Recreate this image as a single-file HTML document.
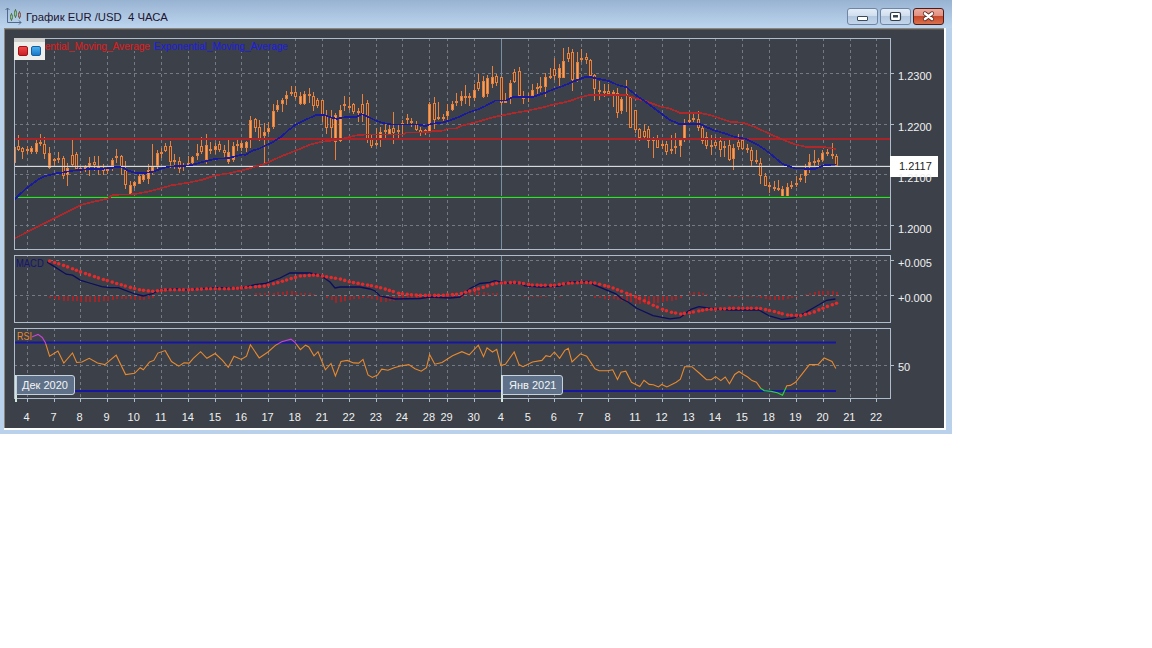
<!DOCTYPE html>
<html><head><meta charset="utf-8"><style>
html,body{margin:0;padding:0;background:#fff;width:1152px;height:648px;overflow:hidden;position:relative;font-family:"Liberation Sans",sans-serif}
.win{position:absolute;left:0;top:0;width:952px;height:434px;background:#b9d1ea}
.tb{position:absolute;left:0;top:0;width:952px;height:28px;background:linear-gradient(#98b3d2,#bdd5ee)}
.panel{position:absolute;left:4px;top:28px;width:940px;height:400px;background:#3b4049;box-shadow:inset 1px 1px 0 #8a867e,inset 1px 2px 0 #57585a}
.wl{position:absolute;background:#fdfeff}
.t{position:absolute;white-space:nowrap;line-height:1}
.btn{position:absolute;top:8px;width:29px;height:15px;border:1px solid #6e86a3;border-radius:3px;background:linear-gradient(#e4edf7 0%,#d0deee 45%,#b3c8df 50%,#c2d5ea 100%)}
.btn.cl{border-color:#4a1c1a;background:linear-gradient(#eeaa9c 0%,#e09080 45%,#c8482c 50%,#d9704c 100%)}
.lbl{position:absolute;height:18px;border:1px solid #c6d2de;border-radius:0 3px 3px 0;background:#5e7188}
</style></head><body>
<div class="win">
<div class="tb"></div>
<svg width="18" height="18" style="position:absolute;left:5px;top:7px" viewBox="0 0 18 18">
<path d="M2.5,1V15.5H16" stroke="#4f6a8c" stroke-width="1" fill="none"/>
<path d="M0.5,3L2.5,1L4.5,3M14,13.5L16,15.5L14,17.5" stroke="#4f6a8c" stroke-width="1" fill="none"/>
<path d="M6.5,6V14M10.5,2V11M14.5,4V12" stroke="#5a7a5a" stroke-width="1"/>
<rect x="5.5" y="8" width="2" height="4" fill="#9bc49b" stroke="#4d7a4d" stroke-width="0.8"/>
<rect x="9.5" y="4" width="2" height="5" fill="#9bc49b" stroke="#4d7a4d" stroke-width="0.8"/>
<rect x="13.5" y="6" width="2" height="4" fill="#c4a0a0" stroke="#7a4d4d" stroke-width="0.8"/>
</svg>
<div class="t" style="left:26px;top:11.7px;font-size:11.3px;color:#1e1430">График EUR /USD&nbsp; 4 ЧАСА</div>
<div class="btn" style="left:847px"><div style="position:absolute;left:9px;top:7px;width:9px;height:3px;background:#fff;border:1px solid #3a4a5a;border-radius:1px"></div></div>
<div class="btn" style="left:880px"><svg width="29" height="15" style="position:absolute;left:0;top:0"><rect x="9.5" y="3.5" width="10" height="8" rx="1.5" fill="#fff" stroke="#303c48" stroke-width="1.2"/><rect x="12" y="6" width="5" height="2.5" fill="#3a4654"/></svg></div>
<div class="btn cl" style="left:913px"><svg width="29" height="15" style="position:absolute;left:0;top:0"><path d="M11,4.4L18,10M18,4.4L11,10" stroke="#5a2a22" stroke-width="4.2" stroke-linecap="round"/><path d="M11,4.4L18,10M18,4.4L11,10" stroke="#fff" stroke-width="2.6" stroke-linecap="round"/></svg></div>
<div class="panel"></div>
<div class="wl" style="left:944px;top:28px;width:2px;height:402px"></div>
<div class="wl" style="left:4px;top:428px;width:942px;height:2px"></div>
<svg width="952" height="434" style="position:absolute;left:0;top:0"><defs><clipPath id="cm"><rect x="15" y="39" width="875" height="210"/></clipPath><clipPath id="rsiMid"><rect x="0" y="344" width="952" height="44"/></clipPath><clipPath id="rsiTop"><rect x="0" y="0" width="952" height="344"/></clipPath><clipPath id="rsiBot"><rect x="0" y="388" width="952" height="40"/></clipPath></defs><path d="M27.5,38V249M27.5,255V322M27.5,328V398M54.5,38V249M54.5,255V322M54.5,328V398M80.5,38V249M80.5,255V322M80.5,328V398M107.5,38V249M107.5,255V322M107.5,328V398M134.5,38V249M134.5,255V322M134.5,328V398M161.5,38V249M161.5,255V322M161.5,328V398M188.5,38V249M188.5,255V322M188.5,328V398M215.5,38V249M215.5,255V322M215.5,328V398M241.5,38V249M241.5,255V322M241.5,328V398M268.5,38V249M268.5,255V322M268.5,328V398M295.5,38V249M295.5,255V322M295.5,328V398M322.5,38V249M322.5,255V322M322.5,328V398M349.5,38V249M349.5,255V322M349.5,328V398M376.5,38V249M376.5,255V322M376.5,328V398M402.5,38V249M402.5,255V322M402.5,328V398M429.5,38V249M429.5,255V322M429.5,328V398M447.5,38V249M447.5,255V322M447.5,328V398M474.5,38V249M474.5,255V322M474.5,328V398M528.5,38V249M528.5,255V322M528.5,328V398M554.5,38V249M554.5,255V322M554.5,328V398M581.5,38V249M581.5,255V322M581.5,328V398M608.5,38V249M608.5,255V322M608.5,328V398M635.5,38V249M635.5,255V322M635.5,328V398M662.5,38V249M662.5,255V322M662.5,328V398M689.5,38V249M689.5,255V322M689.5,328V398M715.5,38V249M715.5,255V322M715.5,328V398M742.5,38V249M742.5,255V322M742.5,328V398M769.5,38V249M769.5,255V322M769.5,328V398M796.5,38V249M796.5,255V322M796.5,328V398M823.5,38V249M823.5,255V322M823.5,328V398M850.5,38V249M850.5,255V322M850.5,328V398M876.5,38V249M876.5,255V322M876.5,328V398" stroke="#737a83" stroke-width="1" stroke-dasharray="3 3" fill="none" shape-rendering="crispEdges"/><path d="M14,73.5H890M14,124.5H890M14,174.5H890M14,225.5H890M14,260.5H890M14,295.5H890M14,365.5H890" stroke="#737a83" stroke-width="1" stroke-dasharray="3 3" fill="none" shape-rendering="crispEdges"/><path d="M501.5,39V249M501.5,256V322M501.5,329V398" stroke="#7a8ea4" stroke-width="1" fill="none" shape-rendering="crispEdges"/><rect x="14.5" y="38.5" width="876" height="211" fill="none" stroke="#aebccb" stroke-width="1" shape-rendering="crispEdges"/><rect x="14.5" y="255.5" width="876" height="67" fill="none" stroke="#aebccb" stroke-width="1" shape-rendering="crispEdges"/><rect x="14.5" y="328.5" width="876" height="70" fill="none" stroke="#aebccb" stroke-width="1" shape-rendering="crispEdges"/><path d="M890,73.5H894M890,124.5H894M890,174.5H894M890,225.5H894M890,260.5H894M890,295.5H894M890,365.5H894M27.5,398V402M54.5,398V402M80.5,398V402M107.5,398V402M134.5,398V402M161.5,398V402M188.5,398V402M215.5,398V402M241.5,398V402M268.5,398V402M295.5,398V402M322.5,398V402M349.5,398V402M376.5,398V402M402.5,398V402M429.5,398V402M447.5,398V402M474.5,398V402M501.5,398V402M528.5,398V402M554.5,398V402M581.5,398V402M608.5,398V402M635.5,398V402M662.5,398V402M689.5,398V402M715.5,398V402M742.5,398V402M769.5,398V402M796.5,398V402M823.5,398V402M850.5,398V402M876.5,398V402" stroke="#aebccb" stroke-width="1" fill="none" shape-rendering="crispEdges"/><g clip-path="url(#cm)"><rect x="14" y="145" width="1" height="20" fill="#e6823e"/><rect x="13" y="147" width="3" height="16" fill="#f4a15c" stroke="none"/><path d="M13.5,147V163M15.5,147V163M13,147.5H16M13,162.5H16" stroke="#e6823e" stroke-width="1" fill="none"/><rect x="18" y="135" width="1" height="16" fill="#e6823e"/><rect x="17" y="146" width="3" height="4" fill="#e6823e"/><rect x="18" y="147" width="1" height="2" fill="#54392f"/><rect x="22" y="147" width="1" height="12" fill="#e6823e"/><rect x="21" y="148" width="3" height="4" fill="#e6823e"/><rect x="22" y="149" width="1" height="2" fill="#54392f"/><rect x="27" y="146" width="1" height="8" fill="#e6823e"/><rect x="26" y="149" width="3" height="2" fill="#e6823e"/><rect x="31" y="146" width="1" height="8" fill="#e6823e"/><rect x="30" y="148" width="3" height="4" fill="#f4a15c" stroke="none"/><path d="M30.5,148V152M32.5,148V152M30,148.5H33M30,151.5H33" stroke="#e6823e" stroke-width="1" fill="none"/><rect x="36" y="140" width="1" height="14" fill="#e6823e"/><rect x="35" y="143" width="3" height="9" fill="#f4a15c" stroke="none"/><path d="M35.5,143V152M37.5,143V152M35,143.5H38M35,151.5H38" stroke="#e6823e" stroke-width="1" fill="none"/><rect x="40" y="134" width="1" height="12" fill="#e6823e"/><rect x="39" y="142" width="3" height="2" fill="#e6823e"/><rect x="44" y="137" width="1" height="22" fill="#e6823e"/><rect x="43" y="144" width="3" height="10" fill="#e6823e"/><rect x="44" y="145" width="1" height="8" fill="#54392f"/><rect x="49" y="147" width="1" height="22" fill="#e6823e"/><rect x="48" y="153" width="3" height="15" fill="#f4a15c" stroke="none"/><path d="M48.5,153V168M50.5,153V168M48,153.5H51M48,167.5H51" stroke="#e6823e" stroke-width="1" fill="none"/><rect x="54" y="158" width="1" height="8" fill="#e6823e"/><rect x="53" y="159" width="3" height="2" fill="#f4a15c" stroke="none"/><path d="M53.5,159V161M55.5,159V161M53,159.5H56M53,160.5H56" stroke="#e6823e" stroke-width="1" fill="none"/><rect x="58" y="152" width="1" height="11" fill="#e6823e"/><rect x="57" y="158" width="3" height="2" fill="#e6823e"/><rect x="63" y="156" width="1" height="23" fill="#e6823e"/><rect x="62" y="158" width="3" height="18" fill="#e6823e"/><rect x="63" y="159" width="1" height="16" fill="#54392f"/><rect x="67" y="163" width="1" height="23" fill="#e6823e"/><rect x="66" y="168" width="3" height="7" fill="#f4a15c" stroke="none"/><path d="M66.5,168V175M68.5,168V175M66,168.5H69M66,174.5H69" stroke="#e6823e" stroke-width="1" fill="none"/><rect x="72" y="140" width="1" height="27" fill="#e6823e"/><rect x="71" y="155" width="3" height="10" fill="#e6823e"/><rect x="72" y="156" width="1" height="8" fill="#54392f"/><rect x="76" y="152" width="1" height="17" fill="#e6823e"/><rect x="75" y="154" width="3" height="15" fill="#e6823e"/><rect x="76" y="155" width="1" height="13" fill="#54392f"/><rect x="80" y="166" width="1" height="7" fill="#e6823e"/><rect x="79" y="168" width="3" height="2" fill="#f4a15c" stroke="none"/><path d="M79.5,168V170M81.5,168V170M79,168.5H82M79,169.5H82" stroke="#e6823e" stroke-width="1" fill="none"/><rect x="85" y="165" width="1" height="7" fill="#e6823e"/><rect x="84" y="167" width="3" height="2" fill="#f4a15c" stroke="none"/><path d="M84.5,167V169M86.5,167V169M84,167.5H87M84,168.5H87" stroke="#e6823e" stroke-width="1" fill="none"/><rect x="89" y="157" width="1" height="19" fill="#e6823e"/><rect x="88" y="163" width="3" height="4" fill="#f4a15c" stroke="none"/><path d="M88.5,163V167M90.5,163V167M88,163.5H91M88,166.5H91" stroke="#e6823e" stroke-width="1" fill="none"/><rect x="94" y="156" width="1" height="15" fill="#e6823e"/><rect x="93" y="162" width="3" height="3" fill="#e6823e"/><rect x="94" y="163" width="1" height="1" fill="#54392f"/><rect x="98" y="156" width="1" height="19" fill="#e6823e"/><rect x="97" y="166" width="3" height="2" fill="#e6823e"/><rect x="103" y="164" width="1" height="11" fill="#e6823e"/><rect x="102" y="169" width="3" height="2" fill="#e6823e"/><rect x="107" y="166" width="1" height="8" fill="#e6823e"/><rect x="106" y="169" width="3" height="2" fill="#f4a15c" stroke="none"/><path d="M106.5,169V171M108.5,169V171M106,169.5H109M106,170.5H109" stroke="#e6823e" stroke-width="1" fill="none"/><rect x="112" y="158" width="1" height="13" fill="#e6823e"/><rect x="111" y="160" width="3" height="6" fill="#f4a15c" stroke="none"/><path d="M111.5,160V166M113.5,160V166M111,160.5H114M111,165.5H114" stroke="#e6823e" stroke-width="1" fill="none"/><rect x="116" y="149" width="1" height="14" fill="#e6823e"/><rect x="115" y="156" width="3" height="2" fill="#e6823e"/><rect x="121" y="155" width="1" height="20" fill="#e6823e"/><rect x="120" y="156" width="3" height="12" fill="#e6823e"/><rect x="121" y="157" width="1" height="10" fill="#54392f"/><rect x="125" y="161" width="1" height="28" fill="#e6823e"/><rect x="124" y="170" width="3" height="15" fill="#e6823e"/><rect x="125" y="171" width="1" height="13" fill="#54392f"/><rect x="130" y="181" width="1" height="14" fill="#e6823e"/><rect x="129" y="185" width="3" height="9" fill="#f4a15c" stroke="none"/><path d="M129.5,185V194M131.5,185V194M129,185.5H132M129,193.5H132" stroke="#e6823e" stroke-width="1" fill="none"/><rect x="134" y="181" width="1" height="7" fill="#e6823e"/><rect x="133" y="182" width="3" height="4" fill="#f4a15c" stroke="none"/><path d="M133.5,182V186M135.5,182V186M133,182.5H136M133,185.5H136" stroke="#e6823e" stroke-width="1" fill="none"/><rect x="139" y="173" width="1" height="11" fill="#e6823e"/><rect x="138" y="176" width="3" height="8" fill="#f4a15c" stroke="none"/><path d="M138.5,176V184M140.5,176V184M138,176.5H141M138,183.5H141" stroke="#e6823e" stroke-width="1" fill="none"/><rect x="143" y="174" width="1" height="8" fill="#e6823e"/><rect x="142" y="175" width="3" height="5" fill="#f4a15c" stroke="none"/><path d="M142.5,175V180M144.5,175V180M142,175.5H145M142,179.5H145" stroke="#e6823e" stroke-width="1" fill="none"/><rect x="148" y="164" width="1" height="20" fill="#e6823e"/><rect x="147" y="170" width="3" height="9" fill="#f4a15c" stroke="none"/><path d="M147.5,170V179M149.5,170V179M147,170.5H150M147,178.5H150" stroke="#e6823e" stroke-width="1" fill="none"/><rect x="152" y="144" width="1" height="31" fill="#e6823e"/><rect x="151" y="167" width="3" height="4" fill="#f4a15c" stroke="none"/><path d="M151.5,167V171M153.5,167V171M151,167.5H154M151,170.5H154" stroke="#e6823e" stroke-width="1" fill="none"/><rect x="157" y="150" width="1" height="19" fill="#e6823e"/><rect x="156" y="153" width="3" height="13" fill="#f4a15c" stroke="none"/><path d="M156.5,153V166M158.5,153V166M156,153.5H159M156,165.5H159" stroke="#e6823e" stroke-width="1" fill="none"/><rect x="161" y="148" width="1" height="10" fill="#e6823e"/><rect x="160" y="152" width="3" height="2" fill="#f4a15c" stroke="none"/><path d="M160.5,152V154M162.5,152V154M160,152.5H163M160,153.5H163" stroke="#e6823e" stroke-width="1" fill="none"/><rect x="165" y="143" width="1" height="9" fill="#e6823e"/><rect x="164" y="146" width="3" height="5" fill="#e6823e"/><rect x="165" y="147" width="1" height="3" fill="#54392f"/><rect x="170" y="141" width="1" height="27" fill="#e6823e"/><rect x="169" y="146" width="3" height="16" fill="#e6823e"/><rect x="170" y="147" width="1" height="14" fill="#54392f"/><rect x="174" y="154" width="1" height="15" fill="#e6823e"/><rect x="173" y="160" width="3" height="2" fill="#e6823e"/><rect x="179" y="157" width="1" height="16" fill="#e6823e"/><rect x="178" y="161" width="3" height="8" fill="#e6823e"/><rect x="179" y="162" width="1" height="6" fill="#54392f"/><rect x="183" y="163" width="1" height="8" fill="#e6823e"/><rect x="182" y="165" width="3" height="2" fill="#f4a15c" stroke="none"/><path d="M182.5,165V167M184.5,165V167M182,165.5H185M182,166.5H185" stroke="#e6823e" stroke-width="1" fill="none"/><rect x="188" y="156" width="1" height="10" fill="#e6823e"/><rect x="187" y="163" width="3" height="2" fill="#f4a15c" stroke="none"/><path d="M187.5,163V165M189.5,163V165M187,163.5H190M187,164.5H190" stroke="#e6823e" stroke-width="1" fill="none"/><rect x="192" y="156" width="1" height="9" fill="#e6823e"/><rect x="191" y="157" width="3" height="6" fill="#f4a15c" stroke="none"/><path d="M191.5,157V163M193.5,157V163M191,157.5H194M191,162.5H194" stroke="#e6823e" stroke-width="1" fill="none"/><rect x="197" y="144" width="1" height="16" fill="#e6823e"/><rect x="196" y="153" width="3" height="3" fill="#f4a15c" stroke="none"/><path d="M196.5,153V156M198.5,153V156M196,153.5H199M196,155.5H199" stroke="#e6823e" stroke-width="1" fill="none"/><rect x="201" y="137" width="1" height="17" fill="#e6823e"/><rect x="200" y="146" width="3" height="6" fill="#e6823e"/><rect x="201" y="147" width="1" height="4" fill="#54392f"/><rect x="206" y="134" width="1" height="30" fill="#e6823e"/><rect x="205" y="145" width="3" height="15" fill="#f4a15c" stroke="none"/><path d="M205.5,145V160M207.5,145V160M205,145.5H208M205,159.5H208" stroke="#e6823e" stroke-width="1" fill="none"/><rect x="210" y="142" width="1" height="12" fill="#e6823e"/><rect x="209" y="149" width="3" height="2" fill="#f4a15c" stroke="none"/><path d="M209.5,149V151M211.5,149V151M209,149.5H212M209,150.5H212" stroke="#e6823e" stroke-width="1" fill="none"/><rect x="215" y="143" width="1" height="11" fill="#e6823e"/><rect x="214" y="146" width="3" height="4" fill="#f4a15c" stroke="none"/><path d="M214.5,146V150M216.5,146V150M214,146.5H217M214,149.5H217" stroke="#e6823e" stroke-width="1" fill="none"/><rect x="219" y="141" width="1" height="11" fill="#e6823e"/><rect x="218" y="144" width="3" height="6" fill="#e6823e"/><rect x="219" y="145" width="1" height="4" fill="#54392f"/><rect x="224" y="145" width="1" height="12" fill="#e6823e"/><rect x="223" y="150" width="3" height="3" fill="#e6823e"/><rect x="224" y="151" width="1" height="1" fill="#54392f"/><rect x="228" y="140" width="1" height="24" fill="#e6823e"/><rect x="227" y="152" width="3" height="10" fill="#f4a15c" stroke="none"/><path d="M227.5,152V162M229.5,152V162M227,152.5H230M227,161.5H230" stroke="#e6823e" stroke-width="1" fill="none"/><rect x="233" y="142" width="1" height="20" fill="#e6823e"/><rect x="232" y="146" width="3" height="14" fill="#f4a15c" stroke="none"/><path d="M232.5,146V160M234.5,146V160M232,146.5H235M232,159.5H235" stroke="#e6823e" stroke-width="1" fill="none"/><rect x="237" y="138" width="1" height="13" fill="#e6823e"/><rect x="236" y="144" width="3" height="2" fill="#e6823e"/><rect x="241" y="141" width="1" height="10" fill="#e6823e"/><rect x="240" y="143" width="3" height="5" fill="#f4a15c" stroke="none"/><path d="M240.5,143V148M242.5,143V148M240,143.5H243M240,147.5H243" stroke="#e6823e" stroke-width="1" fill="none"/><rect x="246" y="141" width="1" height="11" fill="#e6823e"/><rect x="245" y="142" width="3" height="6" fill="#f4a15c" stroke="none"/><path d="M245.5,142V148M247.5,142V148M245,142.5H248M245,147.5H248" stroke="#e6823e" stroke-width="1" fill="none"/><rect x="250" y="116" width="1" height="32" fill="#e6823e"/><rect x="249" y="120" width="3" height="20" fill="#f4a15c" stroke="none"/><path d="M249.5,120V140M251.5,120V140M249,120.5H252M249,139.5H252" stroke="#e6823e" stroke-width="1" fill="none"/><rect x="255" y="118" width="1" height="14" fill="#e6823e"/><rect x="254" y="119" width="3" height="9" fill="#e6823e"/><rect x="255" y="120" width="1" height="7" fill="#54392f"/><rect x="259" y="120" width="1" height="21" fill="#e6823e"/><rect x="258" y="127" width="3" height="12" fill="#e6823e"/><rect x="259" y="128" width="1" height="10" fill="#54392f"/><rect x="264" y="123" width="1" height="41" fill="#e6823e"/><rect x="263" y="132" width="3" height="4" fill="#f4a15c" stroke="none"/><path d="M263.5,132V136M265.5,132V136M263,132.5H266M263,135.5H266" stroke="#e6823e" stroke-width="1" fill="none"/><rect x="268" y="122" width="1" height="12" fill="#e6823e"/><rect x="267" y="128" width="3" height="4" fill="#f4a15c" stroke="none"/><path d="M267.5,128V132M269.5,128V132M267,128.5H270M267,131.5H270" stroke="#e6823e" stroke-width="1" fill="none"/><rect x="273" y="104" width="1" height="25" fill="#e6823e"/><rect x="272" y="111" width="3" height="16" fill="#f4a15c" stroke="none"/><path d="M272.5,111V127M274.5,111V127M272,111.5H275M272,126.5H275" stroke="#e6823e" stroke-width="1" fill="none"/><rect x="277" y="100" width="1" height="12" fill="#e6823e"/><rect x="276" y="105" width="3" height="5" fill="#f4a15c" stroke="none"/><path d="M276.5,105V110M278.5,105V110M276,105.5H279M276,109.5H279" stroke="#e6823e" stroke-width="1" fill="none"/><rect x="282" y="98" width="1" height="14" fill="#e6823e"/><rect x="281" y="100" width="3" height="4" fill="#f4a15c" stroke="none"/><path d="M281.5,100V104M283.5,100V104M281,100.5H284M281,103.5H284" stroke="#e6823e" stroke-width="1" fill="none"/><rect x="286" y="91" width="1" height="14" fill="#e6823e"/><rect x="285" y="95" width="3" height="4" fill="#f4a15c" stroke="none"/><path d="M285.5,95V99M287.5,95V99M285,95.5H288M285,98.5H288" stroke="#e6823e" stroke-width="1" fill="none"/><rect x="291" y="86" width="1" height="10" fill="#e6823e"/><rect x="290" y="92" width="3" height="2" fill="#e6823e"/><rect x="295" y="86" width="1" height="13" fill="#e6823e"/><rect x="294" y="92" width="3" height="5" fill="#e6823e"/><rect x="295" y="93" width="1" height="3" fill="#54392f"/><rect x="300" y="92" width="1" height="13" fill="#e6823e"/><rect x="299" y="96" width="3" height="8" fill="#f4a15c" stroke="none"/><path d="M299.5,96V104M301.5,96V104M299,96.5H302M299,103.5H302" stroke="#e6823e" stroke-width="1" fill="none"/><rect x="304" y="91" width="1" height="14" fill="#e6823e"/><rect x="303" y="94" width="3" height="10" fill="#f4a15c" stroke="none"/><path d="M303.5,94V104M305.5,94V104M303,94.5H306M303,103.5H306" stroke="#e6823e" stroke-width="1" fill="none"/><rect x="309" y="88" width="1" height="15" fill="#e6823e"/><rect x="308" y="94" width="3" height="2" fill="#e6823e"/><rect x="313" y="92" width="1" height="19" fill="#e6823e"/><rect x="312" y="96" width="3" height="10" fill="#e6823e"/><rect x="313" y="97" width="1" height="8" fill="#54392f"/><rect x="317" y="98" width="1" height="10" fill="#e6823e"/><rect x="316" y="100" width="3" height="6" fill="#e6823e"/><rect x="317" y="101" width="1" height="4" fill="#54392f"/><rect x="322" y="100" width="1" height="22" fill="#e6823e"/><rect x="321" y="100" width="3" height="15" fill="#e6823e"/><rect x="322" y="101" width="1" height="13" fill="#54392f"/><rect x="326" y="110" width="1" height="24" fill="#e6823e"/><rect x="325" y="115" width="3" height="13" fill="#e6823e"/><rect x="326" y="116" width="1" height="11" fill="#54392f"/><rect x="331" y="110" width="1" height="28" fill="#e6823e"/><rect x="330" y="117" width="3" height="11" fill="#e6823e"/><rect x="331" y="118" width="1" height="9" fill="#54392f"/><rect x="335" y="113" width="1" height="47" fill="#e6823e"/><rect x="334" y="115" width="3" height="27" fill="#f4a15c" stroke="none"/><path d="M334.5,115V142M336.5,115V142M334,115.5H337M334,141.5H337" stroke="#e6823e" stroke-width="1" fill="none"/><rect x="340" y="105" width="1" height="37" fill="#e6823e"/><rect x="339" y="110" width="3" height="31" fill="#f4a15c" stroke="none"/><path d="M339.5,110V141M341.5,110V141M339,110.5H342M339,140.5H342" stroke="#e6823e" stroke-width="1" fill="none"/><rect x="344" y="96" width="1" height="15" fill="#e6823e"/><rect x="343" y="104" width="3" height="2" fill="#e6823e"/><rect x="349" y="97" width="1" height="13" fill="#e6823e"/><rect x="348" y="106" width="3" height="2" fill="#e6823e"/><rect x="353" y="103" width="1" height="11" fill="#e6823e"/><rect x="352" y="104" width="3" height="8" fill="#e6823e"/><rect x="353" y="105" width="1" height="6" fill="#54392f"/><rect x="358" y="108" width="1" height="14" fill="#e6823e"/><rect x="357" y="111" width="3" height="2" fill="#f4a15c" stroke="none"/><path d="M357.5,111V113M359.5,111V113M357,111.5H360M357,112.5H360" stroke="#e6823e" stroke-width="1" fill="none"/><rect x="362" y="94" width="1" height="28" fill="#e6823e"/><rect x="361" y="104" width="3" height="10" fill="#e6823e"/><rect x="362" y="105" width="1" height="8" fill="#54392f"/><rect x="367" y="100" width="1" height="43" fill="#e6823e"/><rect x="366" y="103" width="3" height="36" fill="#e6823e"/><rect x="367" y="104" width="1" height="34" fill="#54392f"/><rect x="371" y="135" width="1" height="13" fill="#e6823e"/><rect x="370" y="138" width="3" height="8" fill="#e6823e"/><rect x="371" y="139" width="1" height="6" fill="#54392f"/><rect x="376" y="128" width="1" height="18" fill="#e6823e"/><rect x="375" y="143" width="3" height="2" fill="#f4a15c" stroke="none"/><path d="M375.5,143V145M377.5,143V145M375,143.5H378M375,144.5H378" stroke="#e6823e" stroke-width="1" fill="none"/><rect x="380" y="127" width="1" height="20" fill="#e6823e"/><rect x="379" y="132" width="3" height="8" fill="#f4a15c" stroke="none"/><path d="M379.5,132V140M381.5,132V140M379,132.5H382M379,139.5H382" stroke="#e6823e" stroke-width="1" fill="none"/><rect x="385" y="123" width="1" height="16" fill="#e6823e"/><rect x="384" y="130" width="3" height="2" fill="#e6823e"/><rect x="389" y="123" width="1" height="12" fill="#e6823e"/><rect x="388" y="129" width="3" height="5" fill="#f4a15c" stroke="none"/><path d="M388.5,129V134M390.5,129V134M388,129.5H391M388,133.5H391" stroke="#e6823e" stroke-width="1" fill="none"/><rect x="393" y="112" width="1" height="32" fill="#e6823e"/><rect x="392" y="128" width="3" height="5" fill="#e6823e"/><rect x="393" y="129" width="1" height="3" fill="#54392f"/><rect x="398" y="125" width="1" height="14" fill="#e6823e"/><rect x="397" y="130" width="3" height="2" fill="#f4a15c" stroke="none"/><path d="M397.5,130V132M399.5,130V132M397,130.5H400M397,131.5H400" stroke="#e6823e" stroke-width="1" fill="none"/><rect x="402" y="120" width="1" height="14" fill="#e6823e"/><rect x="401" y="123" width="3" height="2" fill="#f4a15c" stroke="none"/><path d="M401.5,123V125M403.5,123V125M401,123.5H404M401,124.5H404" stroke="#e6823e" stroke-width="1" fill="none"/><rect x="407" y="114" width="1" height="10" fill="#e6823e"/><rect x="406" y="118" width="3" height="2" fill="#e6823e"/><rect x="411" y="118" width="1" height="9" fill="#e6823e"/><rect x="410" y="121" width="3" height="2" fill="#e6823e"/><rect x="416" y="121" width="1" height="10" fill="#e6823e"/><rect x="415" y="124" width="3" height="6" fill="#e6823e"/><rect x="416" y="125" width="1" height="4" fill="#54392f"/><rect x="420" y="127" width="1" height="9" fill="#e6823e"/><rect x="419" y="130" width="3" height="3" fill="#e6823e"/><rect x="420" y="131" width="1" height="1" fill="#54392f"/><rect x="425" y="129" width="1" height="6" fill="#e6823e"/><rect x="424" y="130" width="3" height="2" fill="#f4a15c" stroke="none"/><path d="M424.5,130V132M426.5,130V132M424,130.5H427M424,131.5H427" stroke="#e6823e" stroke-width="1" fill="none"/><rect x="429" y="102" width="1" height="30" fill="#e6823e"/><rect x="428" y="104" width="3" height="28" fill="#f4a15c" stroke="none"/><path d="M428.5,104V132M430.5,104V132M428,104.5H431M428,131.5H431" stroke="#e6823e" stroke-width="1" fill="none"/><rect x="434" y="97" width="1" height="32" fill="#e6823e"/><rect x="433" y="103" width="3" height="17" fill="#e6823e"/><rect x="434" y="104" width="1" height="15" fill="#54392f"/><rect x="438" y="102" width="1" height="18" fill="#e6823e"/><rect x="437" y="117" width="3" height="2" fill="#e6823e"/><rect x="443" y="114" width="1" height="8" fill="#e6823e"/><rect x="442" y="117" width="3" height="2" fill="#f4a15c" stroke="none"/><path d="M442.5,117V119M444.5,117V119M442,117.5H445M442,118.5H445" stroke="#e6823e" stroke-width="1" fill="none"/><rect x="447" y="104" width="1" height="16" fill="#e6823e"/><rect x="446" y="111" width="3" height="5" fill="#f4a15c" stroke="none"/><path d="M446.5,111V116M448.5,111V116M446,111.5H449M446,115.5H449" stroke="#e6823e" stroke-width="1" fill="none"/><rect x="452" y="101" width="1" height="10" fill="#e6823e"/><rect x="451" y="104" width="3" height="6" fill="#f4a15c" stroke="none"/><path d="M451.5,104V110M453.5,104V110M451,104.5H454M451,109.5H454" stroke="#e6823e" stroke-width="1" fill="none"/><rect x="456" y="93" width="1" height="13" fill="#e6823e"/><rect x="455" y="101" width="3" height="2" fill="#f4a15c" stroke="none"/><path d="M455.5,101V103M457.5,101V103M455,101.5H458M455,102.5H458" stroke="#e6823e" stroke-width="1" fill="none"/><rect x="461" y="91" width="1" height="15" fill="#e6823e"/><rect x="460" y="96" width="3" height="5" fill="#f4a15c" stroke="none"/><path d="M460.5,96V101M462.5,96V101M460,96.5H463M460,100.5H463" stroke="#e6823e" stroke-width="1" fill="none"/><rect x="465" y="85" width="1" height="19" fill="#e6823e"/><rect x="464" y="96" width="3" height="2" fill="#e6823e"/><rect x="469" y="93" width="1" height="13" fill="#e6823e"/><rect x="468" y="96" width="3" height="2" fill="#f4a15c" stroke="none"/><path d="M468.5,96V98M470.5,96V98M468,96.5H471M468,97.5H471" stroke="#e6823e" stroke-width="1" fill="none"/><rect x="474" y="84" width="1" height="17" fill="#e6823e"/><rect x="473" y="90" width="3" height="8" fill="#f4a15c" stroke="none"/><path d="M473.5,90V98M475.5,90V98M473,90.5H476M473,97.5H476" stroke="#e6823e" stroke-width="1" fill="none"/><rect x="478" y="74" width="1" height="17" fill="#e6823e"/><rect x="477" y="82" width="3" height="7" fill="#e6823e"/><rect x="478" y="83" width="1" height="5" fill="#54392f"/><rect x="483" y="76" width="1" height="22" fill="#e6823e"/><rect x="482" y="81" width="3" height="16" fill="#f4a15c" stroke="none"/><path d="M482.5,81V97M484.5,81V97M482,81.5H485M482,96.5H485" stroke="#e6823e" stroke-width="1" fill="none"/><rect x="487" y="75" width="1" height="22" fill="#e6823e"/><rect x="486" y="78" width="3" height="16" fill="#f4a15c" stroke="none"/><path d="M486.5,78V94M488.5,78V94M486,78.5H489M486,93.5H489" stroke="#e6823e" stroke-width="1" fill="none"/><rect x="492" y="66" width="1" height="22" fill="#e6823e"/><rect x="491" y="77" width="3" height="7" fill="#f4a15c" stroke="none"/><path d="M491.5,77V84M493.5,77V84M491,77.5H494M491,83.5H494" stroke="#e6823e" stroke-width="1" fill="none"/><rect x="496" y="74" width="1" height="12" fill="#e6823e"/><rect x="495" y="76" width="3" height="7" fill="#e6823e"/><rect x="496" y="77" width="1" height="5" fill="#54392f"/><rect x="501" y="77" width="1" height="28" fill="#e6823e"/><rect x="500" y="77" width="3" height="26" fill="#e6823e"/><rect x="501" y="78" width="1" height="24" fill="#54392f"/><rect x="505" y="93" width="1" height="10" fill="#e6823e"/><rect x="504" y="101" width="3" height="2" fill="#f4a15c" stroke="none"/><path d="M504.5,101V103M506.5,101V103M504,101.5H507M504,102.5H507" stroke="#e6823e" stroke-width="1" fill="none"/><rect x="510" y="80" width="1" height="24" fill="#e6823e"/><rect x="509" y="83" width="3" height="15" fill="#f4a15c" stroke="none"/><path d="M509.5,83V98M511.5,83V98M509,83.5H512M509,97.5H512" stroke="#e6823e" stroke-width="1" fill="none"/><rect x="514" y="69" width="1" height="14" fill="#e6823e"/><rect x="513" y="72" width="3" height="10" fill="#e6823e"/><rect x="514" y="73" width="1" height="8" fill="#54392f"/><rect x="519" y="67" width="1" height="30" fill="#e6823e"/><rect x="518" y="71" width="3" height="25" fill="#e6823e"/><rect x="519" y="72" width="1" height="23" fill="#54392f"/><rect x="523" y="91" width="1" height="13" fill="#e6823e"/><rect x="522" y="97" width="3" height="2" fill="#f4a15c" stroke="none"/><path d="M522.5,97V99M524.5,97V99M522,97.5H525M522,98.5H525" stroke="#e6823e" stroke-width="1" fill="none"/><rect x="528" y="93" width="1" height="9" fill="#e6823e"/><rect x="527" y="96" width="3" height="2" fill="#f4a15c" stroke="none"/><path d="M527.5,96V98M529.5,96V98M527,96.5H530M527,97.5H530" stroke="#e6823e" stroke-width="1" fill="none"/><rect x="532" y="84" width="1" height="12" fill="#e6823e"/><rect x="531" y="90" width="3" height="6" fill="#f4a15c" stroke="none"/><path d="M531.5,90V96M533.5,90V96M531,90.5H534M531,95.5H534" stroke="#e6823e" stroke-width="1" fill="none"/><rect x="537" y="83" width="1" height="13" fill="#e6823e"/><rect x="536" y="87" width="3" height="2" fill="#f4a15c" stroke="none"/><path d="M536.5,87V89M538.5,87V89M536,87.5H539M536,88.5H539" stroke="#e6823e" stroke-width="1" fill="none"/><rect x="540" y="77" width="1" height="15" fill="#e6823e"/><rect x="539" y="86" width="3" height="2" fill="#f4a15c" stroke="none"/><path d="M539.5,86V88M541.5,86V88M539,86.5H542M539,87.5H542" stroke="#e6823e" stroke-width="1" fill="none"/><rect x="545" y="73" width="1" height="24" fill="#e6823e"/><rect x="544" y="77" width="3" height="10" fill="#f4a15c" stroke="none"/><path d="M544.5,77V87M546.5,77V87M544,77.5H547M544,86.5H547" stroke="#e6823e" stroke-width="1" fill="none"/><rect x="550" y="68" width="1" height="11" fill="#e6823e"/><rect x="549" y="76" width="3" height="2" fill="#f4a15c" stroke="none"/><path d="M549.5,76V78M551.5,76V78M549,76.5H552M549,77.5H552" stroke="#e6823e" stroke-width="1" fill="none"/><rect x="554" y="58" width="1" height="22" fill="#e6823e"/><rect x="553" y="69" width="3" height="7" fill="#e6823e"/><rect x="554" y="70" width="1" height="5" fill="#54392f"/><rect x="559" y="64" width="1" height="22" fill="#e6823e"/><rect x="558" y="68" width="3" height="10" fill="#f4a15c" stroke="none"/><path d="M558.5,68V78M560.5,68V78M558,68.5H561M558,77.5H561" stroke="#e6823e" stroke-width="1" fill="none"/><rect x="563" y="48" width="1" height="30" fill="#e6823e"/><rect x="562" y="61" width="3" height="17" fill="#f4a15c" stroke="none"/><path d="M562.5,61V78M564.5,61V78M562,61.5H565M562,77.5H565" stroke="#e6823e" stroke-width="1" fill="none"/><rect x="568" y="47" width="1" height="15" fill="#e6823e"/><rect x="567" y="53" width="3" height="6" fill="#e6823e"/><rect x="568" y="54" width="1" height="4" fill="#54392f"/><rect x="572" y="49" width="1" height="42" fill="#e6823e"/><rect x="571" y="52" width="3" height="28" fill="#e6823e"/><rect x="572" y="53" width="1" height="26" fill="#54392f"/><rect x="577" y="52" width="1" height="30" fill="#e6823e"/><rect x="576" y="62" width="3" height="18" fill="#f4a15c" stroke="none"/><path d="M576.5,62V80M578.5,62V80M576,62.5H579M576,79.5H579" stroke="#e6823e" stroke-width="1" fill="none"/><rect x="581" y="49" width="1" height="13" fill="#e6823e"/><rect x="580" y="58" width="3" height="2" fill="#f4a15c" stroke="none"/><path d="M580.5,58V60M582.5,58V60M580,58.5H583M580,59.5H583" stroke="#e6823e" stroke-width="1" fill="none"/><rect x="586" y="53" width="1" height="11" fill="#e6823e"/><rect x="585" y="57" width="3" height="3" fill="#e6823e"/><rect x="586" y="58" width="1" height="1" fill="#54392f"/><rect x="590" y="59" width="1" height="18" fill="#e6823e"/><rect x="589" y="60" width="3" height="16" fill="#e6823e"/><rect x="590" y="61" width="1" height="14" fill="#54392f"/><rect x="594" y="74" width="1" height="27" fill="#e6823e"/><rect x="593" y="75" width="3" height="14" fill="#e6823e"/><rect x="594" y="76" width="1" height="12" fill="#54392f"/><rect x="599" y="81" width="1" height="19" fill="#e6823e"/><rect x="598" y="90" width="3" height="2" fill="#e6823e"/><rect x="604" y="84" width="1" height="13" fill="#e6823e"/><rect x="603" y="91" width="3" height="2" fill="#e6823e"/><rect x="608" y="84" width="1" height="11" fill="#e6823e"/><rect x="607" y="91" width="3" height="3" fill="#e6823e"/><rect x="608" y="92" width="1" height="1" fill="#54392f"/><rect x="613" y="90" width="1" height="17" fill="#e6823e"/><rect x="612" y="92" width="3" height="2" fill="#e6823e"/><rect x="617" y="88" width="1" height="30" fill="#e6823e"/><rect x="616" y="93" width="3" height="20" fill="#e6823e"/><rect x="617" y="94" width="1" height="18" fill="#54392f"/><rect x="621" y="97" width="1" height="17" fill="#e6823e"/><rect x="620" y="99" width="3" height="12" fill="#f4a15c" stroke="none"/><path d="M620.5,99V111M622.5,99V111M620,99.5H623M620,110.5H623" stroke="#e6823e" stroke-width="1" fill="none"/><rect x="626" y="80" width="1" height="32" fill="#e6823e"/><rect x="625" y="94" width="3" height="2" fill="#e6823e"/><rect x="630" y="96" width="1" height="32" fill="#e6823e"/><rect x="629" y="97" width="3" height="31" fill="#e6823e"/><rect x="630" y="98" width="1" height="29" fill="#54392f"/><rect x="635" y="110" width="1" height="23" fill="#e6823e"/><rect x="634" y="110" width="3" height="20" fill="#e6823e"/><rect x="635" y="111" width="1" height="18" fill="#54392f"/><rect x="639" y="128" width="1" height="13" fill="#e6823e"/><rect x="638" y="129" width="3" height="9" fill="#e6823e"/><rect x="639" y="130" width="1" height="7" fill="#54392f"/><rect x="644" y="124" width="1" height="14" fill="#e6823e"/><rect x="643" y="131" width="3" height="6" fill="#e6823e"/><rect x="644" y="132" width="1" height="4" fill="#54392f"/><rect x="648" y="126" width="1" height="22" fill="#e6823e"/><rect x="647" y="129" width="3" height="12" fill="#e6823e"/><rect x="648" y="130" width="1" height="10" fill="#54392f"/><rect x="653" y="137" width="1" height="21" fill="#e6823e"/><rect x="652" y="139" width="3" height="2" fill="#e6823e"/><rect x="657" y="135" width="1" height="13" fill="#e6823e"/><rect x="656" y="139" width="3" height="9" fill="#e6823e"/><rect x="657" y="140" width="1" height="7" fill="#54392f"/><rect x="662" y="141" width="1" height="8" fill="#e6823e"/><rect x="661" y="144" width="3" height="2" fill="#e6823e"/><rect x="666" y="141" width="1" height="14" fill="#e6823e"/><rect x="665" y="144" width="3" height="8" fill="#e6823e"/><rect x="666" y="145" width="1" height="6" fill="#54392f"/><rect x="671" y="135" width="1" height="19" fill="#e6823e"/><rect x="670" y="149" width="3" height="2" fill="#f4a15c" stroke="none"/><path d="M670.5,149V151M672.5,149V151M670,149.5H673M670,150.5H673" stroke="#e6823e" stroke-width="1" fill="none"/><rect x="675" y="133" width="1" height="21" fill="#e6823e"/><rect x="674" y="146" width="3" height="2" fill="#f4a15c" stroke="none"/><path d="M674.5,146V148M676.5,146V148M674,146.5H677M674,147.5H677" stroke="#e6823e" stroke-width="1" fill="none"/><rect x="680" y="138" width="1" height="19" fill="#e6823e"/><rect x="679" y="140" width="3" height="6" fill="#f4a15c" stroke="none"/><path d="M679.5,140V146M681.5,140V146M679,140.5H682M679,145.5H682" stroke="#e6823e" stroke-width="1" fill="none"/><rect x="684" y="119" width="1" height="23" fill="#e6823e"/><rect x="683" y="123" width="3" height="16" fill="#f4a15c" stroke="none"/><path d="M683.5,123V139M685.5,123V139M683,123.5H686M683,138.5H686" stroke="#e6823e" stroke-width="1" fill="none"/><rect x="689" y="114" width="1" height="10" fill="#e6823e"/><rect x="688" y="120" width="3" height="2" fill="#f4a15c" stroke="none"/><path d="M688.5,120V122M690.5,120V122M688,120.5H691M688,121.5H691" stroke="#e6823e" stroke-width="1" fill="none"/><rect x="693" y="113" width="1" height="9" fill="#e6823e"/><rect x="692" y="118" width="3" height="2" fill="#e6823e"/><rect x="698" y="111" width="1" height="20" fill="#e6823e"/><rect x="697" y="119" width="3" height="9" fill="#e6823e"/><rect x="698" y="120" width="1" height="7" fill="#54392f"/><rect x="702" y="126" width="1" height="18" fill="#e6823e"/><rect x="701" y="128" width="3" height="13" fill="#e6823e"/><rect x="702" y="129" width="1" height="11" fill="#54392f"/><rect x="706" y="132" width="1" height="17" fill="#e6823e"/><rect x="705" y="137" width="3" height="9" fill="#e6823e"/><rect x="706" y="138" width="1" height="7" fill="#54392f"/><rect x="711" y="135" width="1" height="20" fill="#e6823e"/><rect x="710" y="145" width="3" height="2" fill="#f4a15c" stroke="none"/><path d="M710.5,145V147M712.5,145V147M710,145.5H713M710,146.5H713" stroke="#e6823e" stroke-width="1" fill="none"/><rect x="715" y="137" width="1" height="11" fill="#e6823e"/><rect x="714" y="142" width="3" height="4" fill="#e6823e"/><rect x="715" y="143" width="1" height="2" fill="#54392f"/><rect x="720" y="137" width="1" height="20" fill="#e6823e"/><rect x="719" y="141" width="3" height="9" fill="#e6823e"/><rect x="720" y="142" width="1" height="7" fill="#54392f"/><rect x="724" y="141" width="1" height="16" fill="#e6823e"/><rect x="723" y="146" width="3" height="2" fill="#e6823e"/><rect x="729" y="140" width="1" height="21" fill="#e6823e"/><rect x="728" y="145" width="3" height="15" fill="#e6823e"/><rect x="729" y="146" width="1" height="13" fill="#54392f"/><rect x="733" y="144" width="1" height="26" fill="#e6823e"/><rect x="732" y="148" width="3" height="11" fill="#f4a15c" stroke="none"/><path d="M732.5,148V159M734.5,148V159M732,148.5H735M732,158.5H735" stroke="#e6823e" stroke-width="1" fill="none"/><rect x="738" y="134" width="1" height="16" fill="#e6823e"/><rect x="737" y="142" width="3" height="5" fill="#e6823e"/><rect x="738" y="143" width="1" height="3" fill="#54392f"/><rect x="742" y="139" width="1" height="11" fill="#e6823e"/><rect x="741" y="140" width="3" height="9" fill="#e6823e"/><rect x="742" y="141" width="1" height="7" fill="#54392f"/><rect x="747" y="144" width="1" height="9" fill="#e6823e"/><rect x="746" y="148" width="3" height="2" fill="#e6823e"/><rect x="751" y="147" width="1" height="19" fill="#e6823e"/><rect x="750" y="150" width="3" height="11" fill="#e6823e"/><rect x="751" y="151" width="1" height="9" fill="#54392f"/><rect x="756" y="150" width="1" height="14" fill="#e6823e"/><rect x="755" y="160" width="3" height="2" fill="#e6823e"/><rect x="760" y="158" width="1" height="26" fill="#e6823e"/><rect x="759" y="163" width="3" height="13" fill="#e6823e"/><rect x="760" y="164" width="1" height="11" fill="#54392f"/><rect x="765" y="173" width="1" height="13" fill="#e6823e"/><rect x="764" y="176" width="3" height="10" fill="#e6823e"/><rect x="765" y="177" width="1" height="8" fill="#54392f"/><rect x="769" y="182" width="1" height="11" fill="#e6823e"/><rect x="768" y="185" width="3" height="2" fill="#e6823e"/><rect x="774" y="181" width="1" height="10" fill="#e6823e"/><rect x="773" y="187" width="3" height="2" fill="#e6823e"/><rect x="778" y="180" width="1" height="11" fill="#e6823e"/><rect x="777" y="188" width="3" height="2" fill="#e6823e"/><rect x="782" y="186" width="1" height="12" fill="#e6823e"/><rect x="781" y="189" width="3" height="9" fill="#f4a15c" stroke="none"/><path d="M781.5,189V198M783.5,189V198M781,189.5H784M781,197.5H784" stroke="#e6823e" stroke-width="1" fill="none"/><rect x="787" y="183" width="1" height="14" fill="#e6823e"/><rect x="786" y="187" width="3" height="10" fill="#f4a15c" stroke="none"/><path d="M786.5,187V197M788.5,187V197M786,187.5H789M786,196.5H789" stroke="#e6823e" stroke-width="1" fill="none"/><rect x="791" y="181" width="1" height="8" fill="#e6823e"/><rect x="790" y="185" width="3" height="2" fill="#f4a15c" stroke="none"/><path d="M790.5,185V187M792.5,185V187M790,185.5H793M790,186.5H793" stroke="#e6823e" stroke-width="1" fill="none"/><rect x="796" y="176" width="1" height="11" fill="#e6823e"/><rect x="795" y="183" width="3" height="2" fill="#f4a15c" stroke="none"/><path d="M795.5,183V185M797.5,183V185M795,183.5H798M795,184.5H798" stroke="#e6823e" stroke-width="1" fill="none"/><rect x="800" y="174" width="1" height="8" fill="#e6823e"/><rect x="799" y="178" width="3" height="2" fill="#f4a15c" stroke="none"/><path d="M799.5,178V180M801.5,178V180M799,178.5H802M799,179.5H802" stroke="#e6823e" stroke-width="1" fill="none"/><rect x="805" y="164" width="1" height="19" fill="#e6823e"/><rect x="804" y="170" width="3" height="6" fill="#f4a15c" stroke="none"/><path d="M804.5,170V176M806.5,170V176M804,170.5H807M804,175.5H807" stroke="#e6823e" stroke-width="1" fill="none"/><rect x="809" y="154" width="1" height="19" fill="#e6823e"/><rect x="808" y="162" width="3" height="5" fill="#f4a15c" stroke="none"/><path d="M808.5,162V167M810.5,162V167M808,162.5H811M808,166.5H811" stroke="#e6823e" stroke-width="1" fill="none"/><rect x="814" y="150" width="1" height="16" fill="#e6823e"/><rect x="813" y="161" width="3" height="2" fill="#f4a15c" stroke="none"/><path d="M813.5,161V163M815.5,161V163M813,161.5H816M813,162.5H816" stroke="#e6823e" stroke-width="1" fill="none"/><rect x="818" y="158" width="1" height="7" fill="#e6823e"/><rect x="817" y="160" width="3" height="2" fill="#f4a15c" stroke="none"/><path d="M817.5,160V162M819.5,160V162M817,160.5H820M817,161.5H820" stroke="#e6823e" stroke-width="1" fill="none"/><rect x="822" y="150" width="1" height="12" fill="#e6823e"/><rect x="821" y="153" width="3" height="7" fill="#f4a15c" stroke="none"/><path d="M821.5,153V160M823.5,153V160M821,153.5H824M821,159.5H824" stroke="#e6823e" stroke-width="1" fill="none"/><rect x="827" y="149" width="1" height="7" fill="#e6823e"/><rect x="826" y="152" width="3" height="2" fill="#e6823e"/><rect x="832" y="143" width="1" height="16" fill="#e6823e"/><rect x="831" y="154" width="3" height="2" fill="#e6823e"/><rect x="836" y="154" width="1" height="13" fill="#e6823e"/><rect x="835" y="156" width="3" height="10" fill="#e6823e"/><rect x="836" y="157" width="1" height="8" fill="#54392f"/><rect x="15" y="138" width="875" height="2" fill="#a82428"/><rect x="15" y="166" width="875" height="1" fill="#d8dadc"/><rect x="15" y="165" width="875" height="1" fill="#8a8c90" opacity="0.35"/><rect x="15" y="196" width="875" height="1" fill="#167016"/><rect x="15" y="197" width="875" height="1" fill="#4ccc4c"/><polyline points="14.0,238.8 40.7,225.2 81.7,204.7 107.8,198.4 113.0,194.8 134.0,194.3 150.8,191.0 171.7,185.3 188.3,182.7 202.9,179.6 215.4,175.4 229.0,173.3 246.0,169.4 263.7,164.2 282.5,155.8 296.0,150.6 310.6,144.4 321.0,141.8 334.5,140.2 345.0,138.1 355.4,135.5 366.0,134.5 403.7,134.4 405.8,132.5 429.7,132.3 432.8,130.9 444.3,130.6 447.4,128.5 455.8,128.5 462.0,125.7 472.4,123.1 482.0,120.5 493.6,117.1 504.0,115.0 514.5,112.9 527.0,110.8 536.3,108.8 545.7,106.7 553.0,104.6 563.4,102.5 569.7,101.0 580.0,97.3 588.4,95.2 598.0,94.7 626.4,95.0 635.8,98.6 646.2,101.2 658.7,106.0 671.2,109.0 679.5,112.7 698.2,112.7 708.0,114.6 716.0,116.9 730.9,122.0 742.4,122.6 753.8,126.6 765.3,131.8 779.0,138.1 795.1,144.4 805.4,146.7 822.6,146.7 836.0,149.0" fill="none" stroke="#b0282a" stroke-width="1.7" shape-rendering="crispEdges"/><polyline points="14.0,200.0 20.2,193.8 27.5,187.5 38.0,179.7 45.2,176.0 55.7,173.4 64.0,172.4 71.3,170.8 87.0,169.3 102.5,168.8 113.0,167.7 117.1,166.7 123.4,167.7 128.6,170.8 136.2,173.1 145.6,172.8 152.9,171.8 161.2,168.6 169.6,166.6 188.3,165.5 192.5,164.8 202.9,161.9 215.4,158.8 227.9,158.2 234.2,156.7 242.5,154.6 246.0,154.8 251.2,151.1 259.5,148.5 266.8,144.9 273.1,141.8 281.4,136.6 287.7,130.8 295.0,125.1 304.3,120.4 316.8,114.7 323.1,114.7 329.3,116.8 336.6,118.9 343.9,117.3 356.4,116.8 361.6,114.2 368.2,116.9 375.5,120.5 382.8,122.9 391.2,124.4 414.0,124.4 420.3,124.7 425.5,126.2 430.8,124.0 443.2,122.3 449.5,120.5 457.8,117.4 468.2,112.7 478.0,109.3 484.2,106.7 495.7,100.4 506.1,100.4 513.4,96.8 533.2,96.8 539.5,94.7 545.7,92.6 554.0,89.0 563.4,85.8 571.8,82.2 581.1,78.5 585.3,77.0 592.0,77.3 598.2,78.9 608.7,81.0 618.0,85.1 626.4,87.2 635.8,95.0 646.2,102.3 658.7,111.7 669.1,119.5 679.5,124.2 700.3,124.2 708.0,127.8 714.9,130.6 725.2,133.5 734.4,136.9 744.7,138.6 757.3,144.4 768.7,152.4 782.5,163.9 795.1,168.4 814.6,169.0 824.9,165.0 836.0,164.4" fill="none" stroke="#1a1a9e" stroke-width="1.7" shape-rendering="crispEdges"/></g><rect x="890" y="156" width="48" height="21" fill="#ffffff"/><rect x="49" y="296" width="2" height="2" fill="#a02428"/><rect x="54" y="296" width="2" height="3" fill="#a02428"/><rect x="58" y="296" width="2" height="4" fill="#a02428"/><rect x="63" y="296" width="2" height="5" fill="#a02428"/><rect x="67" y="296" width="2" height="5" fill="#a02428"/><rect x="72" y="296" width="2" height="5" fill="#a02428"/><rect x="76" y="296" width="2" height="5" fill="#a02428"/><rect x="80" y="296" width="2" height="6" fill="#a02428"/><rect x="85" y="296" width="2" height="6" fill="#a02428"/><rect x="89" y="296" width="2" height="6" fill="#a02428"/><rect x="94" y="296" width="2" height="6" fill="#a02428"/><rect x="98" y="296" width="2" height="6" fill="#a02428"/><rect x="103" y="296" width="2" height="5" fill="#a02428"/><rect x="107" y="296" width="2" height="5" fill="#a02428"/><rect x="112" y="296" width="2" height="4" fill="#a02428"/><rect x="116" y="296" width="2" height="3" fill="#a02428"/><rect x="121" y="296" width="2" height="3" fill="#a02428"/><rect x="125" y="296" width="2" height="3" fill="#a02428"/><rect x="130" y="296" width="2" height="3" fill="#a02428"/><rect x="134" y="296" width="2" height="4" fill="#a02428"/><rect x="139" y="296" width="2" height="4" fill="#a02428"/><rect x="143" y="296" width="2" height="4" fill="#a02428"/><rect x="148" y="296" width="2" height="3" fill="#a02428"/><rect x="152" y="296" width="2" height="2" fill="#a02428"/><rect x="255" y="293" width="2" height="2" fill="#a02428"/><rect x="259" y="293" width="2" height="2" fill="#a02428"/><rect x="264" y="293" width="2" height="2" fill="#a02428"/><rect x="268" y="293" width="2" height="2" fill="#a02428"/><rect x="273" y="293" width="2" height="2" fill="#a02428"/><rect x="277" y="292" width="2" height="3" fill="#a02428"/><rect x="282" y="292" width="2" height="3" fill="#a02428"/><rect x="286" y="291" width="2" height="4" fill="#a02428"/><rect x="291" y="291" width="2" height="4" fill="#a02428"/><rect x="295" y="292" width="2" height="3" fill="#a02428"/><rect x="300" y="293" width="2" height="2" fill="#a02428"/><rect x="304" y="293" width="2" height="2" fill="#a02428"/><rect x="309" y="293" width="2" height="2" fill="#a02428"/><rect x="313" y="294" width="2" height="1" fill="#a02428"/><rect x="326" y="296" width="2" height="2" fill="#a02428"/><rect x="331" y="296" width="2" height="4" fill="#a02428"/><rect x="335" y="296" width="2" height="7" fill="#a02428"/><rect x="340" y="296" width="2" height="6" fill="#a02428"/><rect x="344" y="296" width="2" height="5" fill="#a02428"/><rect x="349" y="296" width="2" height="4" fill="#a02428"/><rect x="353" y="296" width="2" height="3" fill="#a02428"/><rect x="358" y="296" width="2" height="3" fill="#a02428"/><rect x="362" y="296" width="2" height="2" fill="#a02428"/><rect x="367" y="296" width="2" height="2" fill="#a02428"/><rect x="371" y="296" width="2" height="3" fill="#a02428"/><rect x="376" y="296" width="2" height="4" fill="#a02428"/><rect x="380" y="296" width="2" height="6" fill="#a02428"/><rect x="385" y="296" width="2" height="6" fill="#a02428"/><rect x="389" y="296" width="2" height="5" fill="#a02428"/><rect x="393" y="296" width="2" height="5" fill="#a02428"/><rect x="398" y="296" width="2" height="4" fill="#a02428"/><rect x="402" y="296" width="2" height="4" fill="#a02428"/><rect x="407" y="296" width="2" height="3" fill="#a02428"/><rect x="411" y="296" width="2" height="3" fill="#a02428"/><rect x="416" y="296" width="2" height="3" fill="#a02428"/><rect x="420" y="296" width="2" height="2" fill="#a02428"/><rect x="425" y="296" width="2" height="2" fill="#a02428"/><rect x="429" y="296" width="2" height="1" fill="#a02428"/><rect x="434" y="296" width="2" height="1" fill="#a02428"/><rect x="438" y="296" width="2" height="1" fill="#a02428"/><rect x="443" y="296" width="2" height="2" fill="#a02428"/><rect x="447" y="296" width="2" height="2" fill="#a02428"/><rect x="452" y="296" width="2" height="2" fill="#a02428"/><rect x="456" y="296" width="2" height="2" fill="#a02428"/><rect x="461" y="296" width="2" height="2" fill="#a02428"/><rect x="469" y="293" width="2" height="2" fill="#a02428"/><rect x="474" y="292" width="2" height="3" fill="#a02428"/><rect x="478" y="292" width="2" height="3" fill="#a02428"/><rect x="483" y="292" width="2" height="3" fill="#a02428"/><rect x="487" y="293" width="2" height="2" fill="#a02428"/><rect x="492" y="293" width="2" height="2" fill="#a02428"/><rect x="496" y="293" width="2" height="2" fill="#a02428"/><rect x="523" y="296" width="2" height="1" fill="#a02428"/><rect x="528" y="296" width="2" height="1" fill="#a02428"/><rect x="532" y="296" width="2" height="1" fill="#a02428"/><rect x="537" y="296" width="2" height="1" fill="#a02428"/><rect x="540" y="296" width="2" height="1" fill="#a02428"/><rect x="545" y="296" width="2" height="1" fill="#a02428"/><rect x="559" y="296" width="2" height="1" fill="#a02428"/><rect x="594" y="296" width="2" height="2" fill="#a02428"/><rect x="599" y="296" width="2" height="2" fill="#a02428"/><rect x="604" y="296" width="2" height="3" fill="#a02428"/><rect x="608" y="296" width="2" height="3" fill="#a02428"/><rect x="613" y="296" width="2" height="3" fill="#a02428"/><rect x="617" y="296" width="2" height="4" fill="#a02428"/><rect x="621" y="296" width="2" height="5" fill="#a02428"/><rect x="626" y="296" width="2" height="6" fill="#a02428"/><rect x="630" y="296" width="2" height="6" fill="#a02428"/><rect x="635" y="296" width="2" height="8" fill="#a02428"/><rect x="639" y="296" width="2" height="8" fill="#a02428"/><rect x="644" y="296" width="2" height="8" fill="#a02428"/><rect x="648" y="296" width="2" height="8" fill="#a02428"/><rect x="653" y="296" width="2" height="7" fill="#a02428"/><rect x="657" y="296" width="2" height="7" fill="#a02428"/><rect x="662" y="296" width="2" height="6" fill="#a02428"/><rect x="666" y="296" width="2" height="5" fill="#a02428"/><rect x="671" y="296" width="2" height="5" fill="#a02428"/><rect x="675" y="296" width="2" height="4" fill="#a02428"/><rect x="680" y="296" width="2" height="2" fill="#a02428"/><rect x="689" y="293" width="2" height="2" fill="#a02428"/><rect x="693" y="292" width="2" height="3" fill="#a02428"/><rect x="698" y="292" width="2" height="3" fill="#a02428"/><rect x="702" y="293" width="2" height="2" fill="#a02428"/><rect x="706" y="294" width="2" height="1" fill="#a02428"/><rect x="729" y="296" width="2" height="1" fill="#a02428"/><rect x="733" y="296" width="2" height="1" fill="#a02428"/><rect x="738" y="296" width="2" height="1" fill="#a02428"/><rect x="742" y="296" width="2" height="1" fill="#a02428"/><rect x="747" y="296" width="2" height="1" fill="#a02428"/><rect x="751" y="296" width="2" height="1" fill="#a02428"/><rect x="756" y="296" width="2" height="1" fill="#a02428"/><rect x="760" y="296" width="2" height="2" fill="#a02428"/><rect x="765" y="296" width="2" height="3" fill="#a02428"/><rect x="769" y="296" width="2" height="4" fill="#a02428"/><rect x="774" y="296" width="2" height="4" fill="#a02428"/><rect x="778" y="296" width="2" height="4" fill="#a02428"/><rect x="782" y="296" width="2" height="4" fill="#a02428"/><rect x="787" y="296" width="2" height="3" fill="#a02428"/><rect x="791" y="296" width="2" height="2" fill="#a02428"/><rect x="796" y="296" width="2" height="1" fill="#a02428"/><rect x="805" y="294" width="2" height="1" fill="#a02428"/><rect x="809" y="293" width="2" height="2" fill="#a02428"/><rect x="814" y="292" width="2" height="3" fill="#a02428"/><rect x="818" y="291" width="2" height="4" fill="#a02428"/><rect x="822" y="291" width="2" height="4" fill="#a02428"/><rect x="827" y="291" width="2" height="4" fill="#a02428"/><rect x="832" y="291" width="2" height="4" fill="#a02428"/><rect x="836" y="292" width="2" height="3" fill="#a02428"/><polyline points="46.5,261.7 54.8,266.9 66.2,274.2 72.5,275.2 80.8,280.4 91.2,283.5 101.7,286.7 110.0,287.7 118.3,287.7 126.7,290.8 135.0,294.0 143.3,296.0 151.7,294.0 160.0,289.8 176.7,288.8 187.0,289.8 197.5,288.8 218.3,287.7 240.0,288.5 255.0,284.6 265.0,283.5 280.0,278.0 290.0,273.0 310.0,273.0 320.0,275.0 330.0,282.0 335.0,288.0 340.0,287.0 360.0,287.0 370.0,289.0 375.0,291.0 380.0,296.0 395.0,299.0 420.0,298.5 430.0,297.0 450.0,298.0 460.0,297.0 470.0,288.5 480.0,283.5 490.0,282.3 495.0,280.6 505.0,283.0 520.0,283.0 525.0,285.8 540.0,287.0 560.0,286.0 570.0,282.0 590.0,281.5 593.0,284.4 615.8,293.8 622.0,299.0 628.0,302.0 636.7,308.3 653.0,315.6 670.0,318.8 680.0,317.7 690.8,309.4 699.0,306.7 707.5,308.0 717.0,309.0 729.5,310.0 759.0,310.0 769.4,316.0 781.6,319.4 793.8,318.0 804.0,313.4 814.6,307.3 826.7,300.3 835.4,299.0" fill="none" stroke="#0e0e5e" stroke-width="1.3"/><g fill="#e42a2a"><circle cx="49.7" cy="261.0" r="1.8"/><circle cx="54.6" cy="262.5" r="1.8"/><circle cx="58.7" cy="263.8" r="1.8"/><circle cx="63.6" cy="265.4" r="1.8"/><circle cx="67.6" cy="266.9" r="1.8"/><circle cx="72.5" cy="268.8" r="1.8"/><circle cx="76.4" cy="270.3" r="1.8"/><circle cx="80.5" cy="271.9" r="1.8"/><circle cx="85.5" cy="273.6" r="1.8"/><circle cx="89.5" cy="274.9" r="1.8"/><circle cx="94.5" cy="276.6" r="1.8"/><circle cx="98.4" cy="277.9" r="1.8"/><circle cx="103.4" cy="279.5" r="1.8"/><circle cx="107.3" cy="280.6" r="1.8"/><circle cx="112.2" cy="282.1" r="1.8"/><circle cx="116.7" cy="283.5" r="1.8"/><circle cx="121.3" cy="284.8" r="1.8"/><circle cx="125.3" cy="286.0" r="1.8"/><circle cx="130.4" cy="287.4" r="1.8"/><circle cx="134.6" cy="288.5" r="1.8"/><circle cx="139.5" cy="289.8" r="1.8"/><circle cx="143.5" cy="290.3" r="1.8"/><circle cx="148.3" cy="290.9" r="1.8"/><circle cx="152.7" cy="291.2" r="1.8"/><circle cx="157.5" cy="290.7" r="1.8"/><circle cx="161.4" cy="290.3" r="1.8"/><circle cx="165.4" cy="289.9" r="1.8"/><circle cx="170.2" cy="289.8" r="1.8"/><circle cx="174.6" cy="289.8" r="1.8"/><circle cx="179.4" cy="289.8" r="1.8"/><circle cx="183.4" cy="289.8" r="1.8"/><circle cx="188.6" cy="289.7" r="1.8"/><circle cx="192.3" cy="289.5" r="1.8"/><circle cx="197.2" cy="289.3" r="1.8"/><circle cx="201.4" cy="289.1" r="1.8"/><circle cx="206.4" cy="288.8" r="1.8"/><circle cx="210.6" cy="288.8" r="1.8"/><circle cx="215.2" cy="288.8" r="1.8"/><circle cx="219.5" cy="288.8" r="1.8"/><circle cx="224.4" cy="288.8" r="1.8"/><circle cx="228.7" cy="288.8" r="1.8"/><circle cx="233.3" cy="288.4" r="1.8"/><circle cx="237.5" cy="288.2" r="1.8"/><circle cx="241.4" cy="287.9" r="1.8"/><circle cx="246.0" cy="287.5" r="1.8"/><circle cx="250.3" cy="287.2" r="1.8"/><circle cx="255.5" cy="286.8" r="1.8"/><circle cx="259.5" cy="286.4" r="1.8"/><circle cx="264.3" cy="286.1" r="1.8"/><circle cx="268.4" cy="285.1" r="1.8"/><circle cx="273.5" cy="283.7" r="1.8"/><circle cx="277.8" cy="282.6" r="1.8"/><circle cx="282.4" cy="281.3" r="1.8"/><circle cx="286.6" cy="280.0" r="1.8"/><circle cx="291.2" cy="278.6" r="1.8"/><circle cx="295.5" cy="277.4" r="1.8"/><circle cx="300.4" cy="276.0" r="1.8"/><circle cx="304.6" cy="275.7" r="1.8"/><circle cx="309.3" cy="275.4" r="1.8"/><circle cx="313.5" cy="275.1" r="1.8"/><circle cx="317.7" cy="275.4" r="1.8"/><circle cx="322.4" cy="276.1" r="1.8"/><circle cx="326.6" cy="276.8" r="1.8"/><circle cx="331.2" cy="277.5" r="1.8"/><circle cx="335.5" cy="278.2" r="1.8"/><circle cx="340.4" cy="279.1" r="1.8"/><circle cx="344.7" cy="280.4" r="1.8"/><circle cx="349.3" cy="281.8" r="1.8"/><circle cx="353.5" cy="282.6" r="1.8"/><circle cx="358.1" cy="283.4" r="1.8"/><circle cx="362.6" cy="284.2" r="1.8"/><circle cx="367.6" cy="285.1" r="1.8"/><circle cx="371.4" cy="285.8" r="1.8"/><circle cx="376.4" cy="286.8" r="1.8"/><circle cx="380.6" cy="287.7" r="1.8"/><circle cx="385.3" cy="289.1" r="1.8"/><circle cx="389.4" cy="290.4" r="1.8"/><circle cx="393.3" cy="291.6" r="1.8"/><circle cx="398.6" cy="293.3" r="1.8"/><circle cx="402.4" cy="293.9" r="1.8"/><circle cx="407.2" cy="294.3" r="1.8"/><circle cx="411.4" cy="294.7" r="1.8"/><circle cx="416.2" cy="295.1" r="1.8"/><circle cx="420.4" cy="295.4" r="1.8"/><circle cx="425.3" cy="295.4" r="1.8"/><circle cx="429.4" cy="295.4" r="1.8"/><circle cx="434.6" cy="295.4" r="1.8"/><circle cx="438.5" cy="295.4" r="1.8"/><circle cx="443.3" cy="295.2" r="1.8"/><circle cx="447.5" cy="294.9" r="1.8"/><circle cx="452.4" cy="294.5" r="1.8"/><circle cx="456.5" cy="294.2" r="1.8"/><circle cx="461.4" cy="293.6" r="1.8"/><circle cx="465.6" cy="292.3" r="1.8"/><circle cx="469.7" cy="291.1" r="1.8"/><circle cx="474.6" cy="289.9" r="1.8"/><circle cx="478.4" cy="288.9" r="1.8"/><circle cx="483.2" cy="287.4" r="1.8"/><circle cx="487.5" cy="285.9" r="1.8"/><circle cx="492.4" cy="284.2" r="1.8"/><circle cx="496.6" cy="283.2" r="1.8"/><circle cx="501.4" cy="283.0" r="1.8"/><circle cx="505.2" cy="282.8" r="1.8"/><circle cx="510.4" cy="282.6" r="1.8"/><circle cx="514.5" cy="282.4" r="1.8"/><circle cx="519.3" cy="282.9" r="1.8"/><circle cx="523.5" cy="283.5" r="1.8"/><circle cx="528.5" cy="284.4" r="1.8"/><circle cx="532.2" cy="285.0" r="1.8"/><circle cx="537.1" cy="285.1" r="1.8"/><circle cx="541.0" cy="285.2" r="1.8"/><circle cx="545.2" cy="285.2" r="1.8"/><circle cx="550.6" cy="285.4" r="1.8"/><circle cx="554.5" cy="285.2" r="1.8"/><circle cx="559.3" cy="284.5" r="1.8"/><circle cx="563.5" cy="283.9" r="1.8"/><circle cx="568.4" cy="283.3" r="1.8"/><circle cx="572.2" cy="283.0" r="1.8"/><circle cx="577.4" cy="282.7" r="1.8"/><circle cx="581.6" cy="282.4" r="1.8"/><circle cx="586.4" cy="282.5" r="1.8"/><circle cx="590.6" cy="282.8" r="1.8"/><circle cx="594.8" cy="283.0" r="1.8"/><circle cx="599.6" cy="284.2" r="1.8"/><circle cx="604.7" cy="285.6" r="1.8"/><circle cx="608.5" cy="286.6" r="1.8"/><circle cx="613.1" cy="288.0" r="1.8"/><circle cx="617.5" cy="289.7" r="1.8"/><circle cx="621.6" cy="291.3" r="1.8"/><circle cx="626.7" cy="293.3" r="1.8"/><circle cx="630.4" cy="294.7" r="1.8"/><circle cx="635.5" cy="296.8" r="1.8"/><circle cx="639.4" cy="298.4" r="1.8"/><circle cx="644.3" cy="300.7" r="1.8"/><circle cx="648.6" cy="302.9" r="1.8"/><circle cx="653.3" cy="305.3" r="1.8"/><circle cx="657.4" cy="307.0" r="1.8"/><circle cx="662.5" cy="309.2" r="1.8"/><circle cx="666.4" cy="310.8" r="1.8"/><circle cx="671.5" cy="312.2" r="1.8"/><circle cx="675.6" cy="313.0" r="1.8"/><circle cx="680.7" cy="314.0" r="1.8"/><circle cx="684.4" cy="313.4" r="1.8"/><circle cx="689.5" cy="312.7" r="1.8"/><circle cx="693.4" cy="312.0" r="1.8"/><circle cx="698.8" cy="311.0" r="1.8"/><circle cx="702.6" cy="310.3" r="1.8"/><circle cx="706.8" cy="309.5" r="1.8"/><circle cx="711.2" cy="309.2" r="1.8"/><circle cx="715.5" cy="309.1" r="1.8"/><circle cx="720.4" cy="308.8" r="1.8"/><circle cx="724.6" cy="308.7" r="1.8"/><circle cx="729.4" cy="308.4" r="1.8"/><circle cx="733.5" cy="308.3" r="1.8"/><circle cx="738.6" cy="308.2" r="1.8"/><circle cx="742.8" cy="308.2" r="1.8"/><circle cx="747.4" cy="308.2" r="1.8"/><circle cx="751.3" cy="308.2" r="1.8"/><circle cx="756.4" cy="308.2" r="1.8"/><circle cx="760.6" cy="308.5" r="1.8"/><circle cx="765.6" cy="309.6" r="1.8"/><circle cx="769.5" cy="310.5" r="1.8"/><circle cx="774.4" cy="311.5" r="1.8"/><circle cx="778.8" cy="312.8" r="1.8"/><circle cx="782.2" cy="313.7" r="1.8"/><circle cx="787.6" cy="315.0" r="1.8"/><circle cx="791.4" cy="315.2" r="1.8"/><circle cx="796.4" cy="315.4" r="1.8"/><circle cx="800.7" cy="315.6" r="1.8"/><circle cx="805.3" cy="314.4" r="1.8"/><circle cx="809.6" cy="313.3" r="1.8"/><circle cx="814.3" cy="311.9" r="1.8"/><circle cx="818.9" cy="309.9" r="1.8"/><circle cx="823.0" cy="308.2" r="1.8"/><circle cx="827.4" cy="306.4" r="1.8"/><circle cx="832.3" cy="304.7" r="1.8"/><circle cx="836.5" cy="303.2" r="1.8"/></g><rect x="15" y="341.5" width="821" height="2" fill="#1616a2"/><rect x="15" y="390" width="821" height="2" fill="#1616a2"/><polyline points="15.0,333.0 31.9,337.0 38.0,334.4 42.3,337.5 45.4,342.7 49.6,356.2 57.9,351.0 63.8,363.0 72.5,353.0 76.7,362.5 81.9,362.0 89.2,358.3 97.5,363.0 104.8,364.6 116.2,355.2 125.6,374.6 134.6,373.3 140.2,367.7 143.3,369.8 149.6,362.0 153.8,360.4 157.9,353.1 165.2,350.6 171.5,361.5 178.8,366.2 184.0,362.9 189.2,363.1 193.3,358.3 200.6,351.7 206.9,358.3 215.2,353.5 222.5,360.4 228.3,367.3 234.0,356.2 241.2,359.4 246.5,356.2 250.4,344.8 259.2,357.9 268.0,352.0 275.4,345.4 281.7,341.7 291.0,339.2 295.2,342.7 300.4,349.6 305.6,345.2 308.8,346.9 314.0,355.8 318.0,351.7 325.4,369.8 331.0,363.5 335.4,376.0 341.0,361.5 347.3,360.4 353.5,362.9 358.8,363.1 363.0,359.4 368.0,375.0 372.3,377.5 377.5,375.0 381.7,369.2 388.0,370.2 394.2,367.7 400.4,366.0 408.8,364.6 415.0,368.8 421.2,371.2 426.5,367.7 429.6,354.6 434.8,364.2 442.0,362.5 452.5,355.8 461.9,351.7 469.2,354.8 478.3,345.2 483.5,356.7 487.0,347.9 492.5,352.0 496.7,349.4 500.8,365.6 505.4,364.2 514.2,352.0 519.0,364.6 523.0,366.7 532.5,362.0 541.9,360.4 546.0,355.6 550.2,356.7 554.4,352.0 559.6,358.3 564.8,350.4 568.3,348.3 572.0,362.0 580.4,353.8 586.7,356.2 595.0,368.8 599.2,370.8 607.5,370.8 612.7,369.8 617.5,379.6 621.0,372.3 625.8,371.2 631.5,382.3 639.8,386.5 644.0,380.2 649.2,384.4 653.3,384.8 658.5,386.9 661.7,384.4 666.9,387.0 676.2,382.3 680.4,379.2 684.6,366.7 691.9,366.7 699.2,373.0 706.5,379.6 711.3,379.7 715.6,376.6 720.8,380.6 725.2,377.0 729.5,383.7 734.7,374.5 739.0,371.5 743.4,374.5 747.7,377.0 752.0,380.6 756.4,382.3 760.8,388.4 764.2,390.6 771.2,391.3 777.3,392.7 782.5,395.3 786.8,385.8 790.3,385.4 795.5,382.3 802.4,373.6 809.4,364.6 818.0,364.6 824.1,358.0 832.0,361.5 835.8,368.4" fill="none" stroke="#e8892e" stroke-width="1.1" clip-path="url(#rsiMid)"/><polyline points="15.0,333.0 31.9,337.0 38.0,334.4 42.3,337.5 45.4,342.7 49.6,356.2 57.9,351.0 63.8,363.0 72.5,353.0 76.7,362.5 81.9,362.0 89.2,358.3 97.5,363.0 104.8,364.6 116.2,355.2 125.6,374.6 134.6,373.3 140.2,367.7 143.3,369.8 149.6,362.0 153.8,360.4 157.9,353.1 165.2,350.6 171.5,361.5 178.8,366.2 184.0,362.9 189.2,363.1 193.3,358.3 200.6,351.7 206.9,358.3 215.2,353.5 222.5,360.4 228.3,367.3 234.0,356.2 241.2,359.4 246.5,356.2 250.4,344.8 259.2,357.9 268.0,352.0 275.4,345.4 281.7,341.7 291.0,339.2 295.2,342.7 300.4,349.6 305.6,345.2 308.8,346.9 314.0,355.8 318.0,351.7 325.4,369.8 331.0,363.5 335.4,376.0 341.0,361.5 347.3,360.4 353.5,362.9 358.8,363.1 363.0,359.4 368.0,375.0 372.3,377.5 377.5,375.0 381.7,369.2 388.0,370.2 394.2,367.7 400.4,366.0 408.8,364.6 415.0,368.8 421.2,371.2 426.5,367.7 429.6,354.6 434.8,364.2 442.0,362.5 452.5,355.8 461.9,351.7 469.2,354.8 478.3,345.2 483.5,356.7 487.0,347.9 492.5,352.0 496.7,349.4 500.8,365.6 505.4,364.2 514.2,352.0 519.0,364.6 523.0,366.7 532.5,362.0 541.9,360.4 546.0,355.6 550.2,356.7 554.4,352.0 559.6,358.3 564.8,350.4 568.3,348.3 572.0,362.0 580.4,353.8 586.7,356.2 595.0,368.8 599.2,370.8 607.5,370.8 612.7,369.8 617.5,379.6 621.0,372.3 625.8,371.2 631.5,382.3 639.8,386.5 644.0,380.2 649.2,384.4 653.3,384.8 658.5,386.9 661.7,384.4 666.9,387.0 676.2,382.3 680.4,379.2 684.6,366.7 691.9,366.7 699.2,373.0 706.5,379.6 711.3,379.7 715.6,376.6 720.8,380.6 725.2,377.0 729.5,383.7 734.7,374.5 739.0,371.5 743.4,374.5 747.7,377.0 752.0,380.6 756.4,382.3 760.8,388.4 764.2,390.6 771.2,391.3 777.3,392.7 782.5,395.3 786.8,385.8 790.3,385.4 795.5,382.3 802.4,373.6 809.4,364.6 818.0,364.6 824.1,358.0 832.0,361.5 835.8,368.4" fill="none" stroke="#c845d0" stroke-width="1.1" clip-path="url(#rsiTop)"/><polyline points="15.0,333.0 31.9,337.0 38.0,334.4 42.3,337.5 45.4,342.7 49.6,356.2 57.9,351.0 63.8,363.0 72.5,353.0 76.7,362.5 81.9,362.0 89.2,358.3 97.5,363.0 104.8,364.6 116.2,355.2 125.6,374.6 134.6,373.3 140.2,367.7 143.3,369.8 149.6,362.0 153.8,360.4 157.9,353.1 165.2,350.6 171.5,361.5 178.8,366.2 184.0,362.9 189.2,363.1 193.3,358.3 200.6,351.7 206.9,358.3 215.2,353.5 222.5,360.4 228.3,367.3 234.0,356.2 241.2,359.4 246.5,356.2 250.4,344.8 259.2,357.9 268.0,352.0 275.4,345.4 281.7,341.7 291.0,339.2 295.2,342.7 300.4,349.6 305.6,345.2 308.8,346.9 314.0,355.8 318.0,351.7 325.4,369.8 331.0,363.5 335.4,376.0 341.0,361.5 347.3,360.4 353.5,362.9 358.8,363.1 363.0,359.4 368.0,375.0 372.3,377.5 377.5,375.0 381.7,369.2 388.0,370.2 394.2,367.7 400.4,366.0 408.8,364.6 415.0,368.8 421.2,371.2 426.5,367.7 429.6,354.6 434.8,364.2 442.0,362.5 452.5,355.8 461.9,351.7 469.2,354.8 478.3,345.2 483.5,356.7 487.0,347.9 492.5,352.0 496.7,349.4 500.8,365.6 505.4,364.2 514.2,352.0 519.0,364.6 523.0,366.7 532.5,362.0 541.9,360.4 546.0,355.6 550.2,356.7 554.4,352.0 559.6,358.3 564.8,350.4 568.3,348.3 572.0,362.0 580.4,353.8 586.7,356.2 595.0,368.8 599.2,370.8 607.5,370.8 612.7,369.8 617.5,379.6 621.0,372.3 625.8,371.2 631.5,382.3 639.8,386.5 644.0,380.2 649.2,384.4 653.3,384.8 658.5,386.9 661.7,384.4 666.9,387.0 676.2,382.3 680.4,379.2 684.6,366.7 691.9,366.7 699.2,373.0 706.5,379.6 711.3,379.7 715.6,376.6 720.8,380.6 725.2,377.0 729.5,383.7 734.7,374.5 739.0,371.5 743.4,374.5 747.7,377.0 752.0,380.6 756.4,382.3 760.8,388.4 764.2,390.6 771.2,391.3 777.3,392.7 782.5,395.3 786.8,385.8 790.3,385.4 795.5,382.3 802.4,373.6 809.4,364.6 818.0,364.6 824.1,358.0 832.0,361.5 835.8,368.4" fill="none" stroke="#2cd040" stroke-width="1.2" clip-path="url(#rsiBot)"/></svg>
<div style="position:absolute;left:45px;top:39px;width:245px;height:12px;background:#3b4049"></div><div class="t" style="left:16.3px;top:41.2px;font-size:11px;color:#e01c1c;transform:scaleX(0.918);transform-origin:0 0">Exponential_Moving_Average</div>
<div class="t" style="left:154.2px;top:41.2px;font-size:11px;color:#1c1ce0;transform:scaleX(0.918);transform-origin:0 0">Exponential_Moving_Average</div>
<div style="position:absolute;left:14px;top:38px;width:31px;height:22px;background:#eeeeec"><div style="height:4px;background:#cfcfcd"></div>
<div style="position:absolute;left:4px;top:8px;width:8px;height:8px;border:1px solid #9a1418;border-radius:2px;background:linear-gradient(#f04848,#cc2028)"></div>
<div style="position:absolute;left:17px;top:8px;width:8px;height:8px;border:1px solid #1460a0;border-radius:2px;background:linear-gradient(#48b0f0,#1a78c8)"></div>
</div>
<div style="position:absolute;left:15px;top:257px;width:32px;height:11px;background:#3b4049"></div><div class="t" style="left:16.2px;top:257.9px;font-size:10.7px;color:#161670;transform:scaleX(0.88);transform-origin:0 0">MACD</div>
<div style="position:absolute;left:15px;top:331px;width:17px;height:10px;background:#3b4049"></div><div class="t" style="left:16.5px;top:331px;font-size:11px;color:#e8892e;transform:scaleX(0.81);transform-origin:0 0">RSI</div>
<div class="t" style="left:898px;top:70.5px;font-size:11px;color:#f0f0f0">1.2300</div>
<div class="t" style="left:898px;top:121.5px;font-size:11px;color:#f0f0f0">1.2200</div>
<div class="t" style="left:898px;top:172.5px;font-size:11px;color:#f0f0f0">1.2100</div>
<div class="t" style="left:898px;top:223.5px;font-size:11px;color:#f0f0f0">1.2000</div>
<div class="t" style="left:898px;top:257.5px;font-size:11px;color:#f0f0f0">+0.005</div>
<div class="t" style="left:898px;top:292.5px;font-size:11px;color:#f0f0f0">+0.000</div>
<div class="t" style="left:898px;top:362.0px;font-size:11px;color:#f0f0f0">50</div>
<div class="t" style="left:899px;top:161px;font-size:11px;color:#222">1.2117</div>
<div class="t" style="left:6.6px;width:40px;text-align:center;top:411.5px;font-size:11px;color:#f0f0f0">4</div>
<div class="t" style="left:33.5px;width:40px;text-align:center;top:411.5px;font-size:11px;color:#f0f0f0">7</div>
<div class="t" style="left:59.5px;width:40px;text-align:center;top:411.5px;font-size:11px;color:#f0f0f0">8</div>
<div class="t" style="left:86.6px;width:40px;text-align:center;top:411.5px;font-size:11px;color:#f0f0f0">9</div>
<div class="t" style="left:113.7px;width:40px;text-align:center;top:411.5px;font-size:11px;color:#f0f0f0">10</div>
<div class="t" style="left:140.8px;width:40px;text-align:center;top:411.5px;font-size:11px;color:#f0f0f0">11</div>
<div class="t" style="left:167.8px;width:40px;text-align:center;top:411.5px;font-size:11px;color:#f0f0f0">14</div>
<div class="t" style="left:194.9px;width:40px;text-align:center;top:411.5px;font-size:11px;color:#f0f0f0">15</div>
<div class="t" style="left:221.0px;width:40px;text-align:center;top:411.5px;font-size:11px;color:#f0f0f0">16</div>
<div class="t" style="left:247.5px;width:40px;text-align:center;top:411.5px;font-size:11px;color:#f0f0f0">17</div>
<div class="t" style="left:274.7px;width:40px;text-align:center;top:411.5px;font-size:11px;color:#f0f0f0">18</div>
<div class="t" style="left:301.9px;width:40px;text-align:center;top:411.5px;font-size:11px;color:#f0f0f0">21</div>
<div class="t" style="left:328.7px;width:40px;text-align:center;top:411.5px;font-size:11px;color:#f0f0f0">22</div>
<div class="t" style="left:355.8px;width:40px;text-align:center;top:411.5px;font-size:11px;color:#f0f0f0">23</div>
<div class="t" style="left:381.8px;width:40px;text-align:center;top:411.5px;font-size:11px;color:#f0f0f0">24</div>
<div class="t" style="left:408.9px;width:40px;text-align:center;top:411.5px;font-size:11px;color:#f0f0f0">28</div>
<div class="t" style="left:426.6px;width:40px;text-align:center;top:411.5px;font-size:11px;color:#f0f0f0">29</div>
<div class="t" style="left:453.7px;width:40px;text-align:center;top:411.5px;font-size:11px;color:#f0f0f0">30</div>
<div class="t" style="left:480.8px;width:40px;text-align:center;top:411.5px;font-size:11px;color:#f0f0f0">4</div>
<div class="t" style="left:507.8px;width:40px;text-align:center;top:411.5px;font-size:11px;color:#f0f0f0">5</div>
<div class="t" style="left:533.9px;width:40px;text-align:center;top:411.5px;font-size:11px;color:#f0f0f0">6</div>
<div class="t" style="left:560.5px;width:40px;text-align:center;top:411.5px;font-size:11px;color:#f0f0f0">7</div>
<div class="t" style="left:587.6px;width:40px;text-align:center;top:411.5px;font-size:11px;color:#f0f0f0">8</div>
<div class="t" style="left:614.9px;width:40px;text-align:center;top:411.5px;font-size:11px;color:#f0f0f0">11</div>
<div class="t" style="left:641.5px;width:40px;text-align:center;top:411.5px;font-size:11px;color:#f0f0f0">12</div>
<div class="t" style="left:668.5px;width:40px;text-align:center;top:411.5px;font-size:11px;color:#f0f0f0">13</div>
<div class="t" style="left:694.9px;width:40px;text-align:center;top:411.5px;font-size:11px;color:#f0f0f0">14</div>
<div class="t" style="left:721.8px;width:40px;text-align:center;top:411.5px;font-size:11px;color:#f0f0f0">15</div>
<div class="t" style="left:748.7px;width:40px;text-align:center;top:411.5px;font-size:11px;color:#f0f0f0">18</div>
<div class="t" style="left:775.4px;width:40px;text-align:center;top:411.5px;font-size:11px;color:#f0f0f0">19</div>
<div class="t" style="left:802.6px;width:40px;text-align:center;top:411.5px;font-size:11px;color:#f0f0f0">20</div>
<div class="t" style="left:829.3px;width:40px;text-align:center;top:411.5px;font-size:11px;color:#f0f0f0">21</div>
<div class="t" style="left:856.0px;width:40px;text-align:center;top:411.5px;font-size:11px;color:#f0f0f0">22</div>
<div style="position:absolute;left:15px;top:375px;width:2px;height:27px;background:#d2e6de"></div><div class="lbl" style="left:16px;top:375px;width:57px"></div><div class="t" style="left:22px;top:380px;font-size:11px;color:#f4f4f4">Дек 2020</div><div style="position:absolute;left:501px;top:375px;width:2px;height:27px;background:#d2e6de"></div><div class="lbl" style="left:502px;top:375px;width:59px"></div><div class="t" style="left:509px;top:380px;font-size:11px;color:#f4f4f4">Янв 2021</div></div></body></html>
